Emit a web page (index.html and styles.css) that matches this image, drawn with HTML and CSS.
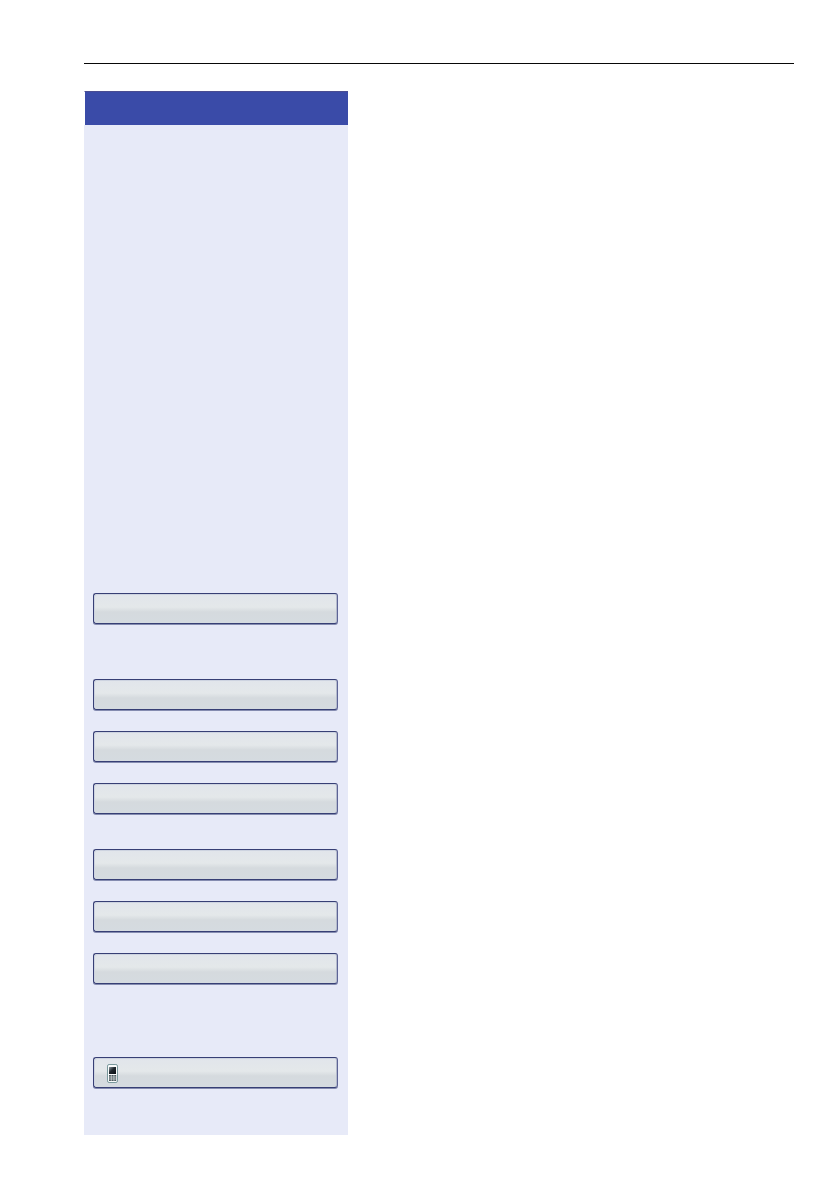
FILE: index.html
```html
<!DOCTYPE html>
<html lang="en">
<head>
<meta charset="utf-8">
<title>Phone display keys</title>
<link rel="stylesheet" href="styles.css">
</head>
<body>
<main class="page">
<hr class="rule">
<aside class="panel">
<div class="panel-header"></div>
<div class="keys">
<div class="group"><div class="key"></div></div>
<div class="group"><div class="key"></div><div class="key"></div><div class="key"></div></div>
<div class="group group-near"><div class="key"></div><div class="key"></div><div class="key"></div></div>
<div class="group group-last"><div class="key">
<svg class="phone" viewBox="0 0 12 20" width="12" height="20" aria-hidden="true">
<defs><linearGradient id="screen" x1="0" y1="0" x2="1" y2="1"><stop offset="0" stop-color="#8f9ba2"/><stop offset=".45" stop-color="#20272d"/><stop offset="1" stop-color="#080d12"/></linearGradient></defs>
<rect x=".5" y=".5" width="10" height="18" rx="1.6" fill="#f8fafa" stroke="#78979b"/>
<rect x="2" y="3" width="7" height="7" fill="url(#screen)"/>
<rect x="2" y="11" width="7.2" height="6" fill="#4e5b60"/>
<path d="M4.3 11v6M6.9 11v6M2 13h7.2M2 15h7.2" stroke="#e9eeee" stroke-width=".6"/>
</svg>
</div></div>
</div>
</aside>
</main>
</body>
</html>
```
FILE: styles.css
```css
* { box-sizing: border-box; }
body { margin: 0; background: #fff; font-family: "Liberation Sans", Arial, sans-serif; }
.page { width: 838px; height: 1192px; padding: 63px 44px 0 84px; }
.rule { height: 1px; margin: 0 0 27px; border: 0; background: #080808; }
.panel { width: 264px; height: 1044px; background: #e7eaf8; }
.panel-header { height: 34px; background: #3a4ba8; border-left: 1px solid #fff; border-top: 1px solid #4a4d91; }
.keys { padding: 468px 10px 0 9px; }
.group { display: flex; flex-direction: column; gap: 21px; height: 32px; margin-bottom: 54px; }
.group + .group { height: 136px; margin-bottom: 34px; }
.group + .group-near { margin-bottom: 72px; }
.group + .group-last { height: 32px; margin-bottom: 0; }
.key {
  display: flex;
  align-items: center;
  flex: none;
  height: 31px;
  padding-left: 13px;
  border: 1px solid #373f75;
  border-right-color: #5d6495;
  border-radius: 3px;
  background: linear-gradient(#e1e5eb 0%, #e4e8ea 45%, #d5dade 62%, #d5dbe0 100%);
  box-shadow: inset 1px 1px #cdd3e0, inset -1px 0 #b4bacd, 0 1px #858cb0;
}
.phone { display: block; margin-top: 2px; }
```
